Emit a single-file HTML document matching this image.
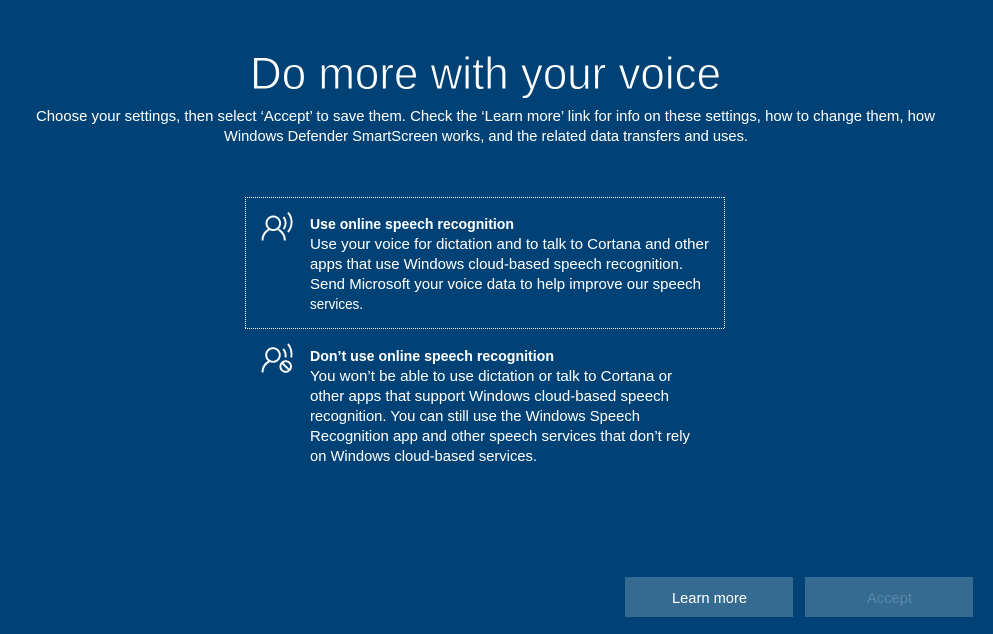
<!DOCTYPE html>
<html lang="en">
<head>
<meta charset="utf-8">
<title>Do more with your voice</title>
<style>
html,body{margin:0;padding:0;width:993px;height:634px;overflow:hidden;background:#004275}
svg{display:block}
text{font-family:"Liberation Sans",sans-serif;fill:#fff;font-size:14.6px}
.b{font-weight:bold;font-size:14.6px}
.t{font-size:45.500px;font-weight:normal;stroke:#004275;stroke-width:0.9px}
.ic{fill:none;stroke:#fff;stroke-width:1.9}
.d{stroke:#fff;stroke-width:1;stroke-dasharray:1 1;fill:none}
</style>
</head>
<body>
<svg width="993" height="634" viewBox="0 0 993 634" xmlns="http://www.w3.org/2000/svg">
<rect width="993" height="634" fill="#004275"/>
<text class="t" x="250" y="89" textLength="471" lengthAdjust="spacingAndGlyphs">Do more with your voice</text>
<text x="36" y="121" textLength="899" lengthAdjust="spacingAndGlyphs">Choose your settings, then select ‘Accept’ to save them. Check the ‘Learn more’ link for info on these settings, how to change them, how</text>
<text x="224" y="141" textLength="524" lengthAdjust="spacingAndGlyphs">Windows Defender SmartScreen works, and the related data transfers and uses.</text>

<path class="d" d="M245 197.500H725M245 328.500H725M245.500 197V329M724.500 197V329"/>

<g class="ic">
<circle cx="273.300" cy="223.300" r="6.800"/>
<path d="M262.500 240.500c0-5 2.500-8.800 6.500-11M284.800 240.500c0-5-2.500-8.800-6.500-11"/>
<path d="M283.500 217c2.800 3.800 2.800 8.200 0 12"/>
<path d="M288 212.500c4.800 6 4.800 13.500 0 19.500"/>
</g>
<text class="b" x="310" y="229" textLength="204" lengthAdjust="spacingAndGlyphs">Use online speech recognition</text>
<text x="310" y="249" textLength="399" lengthAdjust="spacingAndGlyphs">Use your voice for dictation and to talk to Cortana and other</text>
<text x="310" y="269" textLength="373" lengthAdjust="spacingAndGlyphs">apps that use Windows cloud-based speech recognition.</text>
<text x="310" y="289" textLength="391" lengthAdjust="spacingAndGlyphs">Send Microsoft your voice data to help improve our speech</text>
<text x="310" y="309" textLength="53" lengthAdjust="spacingAndGlyphs">services.</text>

<g class="ic">
<circle cx="273" cy="355" r="6.800"/>
<path d="M262.500 372.500c0-5 2.500-8.800 6.500-11"/>
<path d="M283.200 349c2.200 2.500 2.800 5.500 2.300 8.500"/>
<path d="M288 344c3.200 4 4 9 3.300 13.500"/>
<circle cx="285.700" cy="366.500" r="5.300"/>
<path d="M282 362.800l7.400 7.400"/>
</g>
<text class="b" x="310" y="361" textLength="244" lengthAdjust="spacingAndGlyphs">Don’t use online speech recognition</text>
<text x="310" y="381" textLength="362" lengthAdjust="spacingAndGlyphs">You won’t be able to use dictation or talk to Cortana or</text>
<text x="310" y="401" textLength="359" lengthAdjust="spacingAndGlyphs">other apps that support Windows cloud-based speech</text>
<text x="310" y="421" textLength="330" lengthAdjust="spacingAndGlyphs">recognition. You can still use the Windows Speech</text>
<text x="310" y="441" textLength="380" lengthAdjust="spacingAndGlyphs">Recognition app and other speech services that don’t rely</text>
<text x="310" y="461" textLength="227" lengthAdjust="spacingAndGlyphs">on Windows cloud-based services.</text>

<rect x="625" y="577" width="168" height="40" fill="#356a91"/>
<text x="672" y="603" textLength="75" lengthAdjust="spacingAndGlyphs">Learn more</text>
<rect x="805" y="577" width="168" height="40" fill="#356a91"/>
<text x="867" y="603" textLength="45" lengthAdjust="spacingAndGlyphs" style="fill:#5a87a8">Accept</text>
</svg>
</body>
</html>
